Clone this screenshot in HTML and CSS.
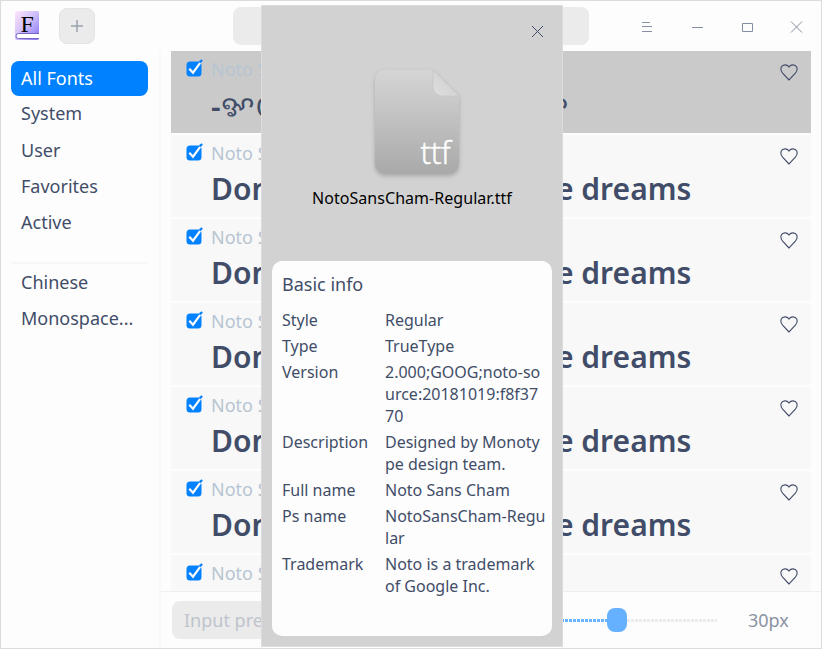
FILE: index.html
```html
<!DOCTYPE html>
<html lang="en">
<head>
<meta charset="utf-8">
<title>Font Manager</title>
<link rel="stylesheet" href="styles.css">
</head>
<body>
<svg class="defs" width="0" height="0" aria-hidden="true">
  <defs>
    <symbol id="check" viewBox="0 0 18 18">
      <rect x="1.500" y="2.500" width="15" height="15" rx="3.500" fill="#0081ff"/>
      <path d="M4.300 9.700l3.700 4L15.200 3.900" fill="none" stroke="#fbfbfb" stroke-width="2.200"/>
      <path d="M14.600 3.100L17.200 1.100" fill="none" stroke="#0081ff" stroke-width="2.200"/>
    </symbol>
    <symbol id="heart" viewBox="0 0 18 17">
      <path d="M9 16L2.600 9.200C.7 7 .6 4.700 1.300 3C2.600.3 7.200.1 9 3C10.800.1 15.400.3 16.700 3C17.400 4.700 17.300 7 15.400 9.200Z" fill="none" stroke="#414d68" stroke-width="1.100"/>
    </symbol>
  </defs>
</svg>
<div class="window">
  <header class="titlebar">
    <svg class="logo" width="26" height="32" viewBox="0 0 26 32">
      <defs><linearGradient id="lg" x1="0" y1="0" x2="1" y2="1"><stop offset="0" stop-color="#ffe6fb"/><stop offset=".5" stop-color="#cdbcfb"/><stop offset="1" stop-color="#8272f4"/></linearGradient></defs>
      <rect x="1" y="1" width="24" height="29" rx="2" fill="url(#lg)"/>
      <path d="M25 23.500H4.500a2.500 2.500 0 0 0 0 5H25" fill="#fff" stroke="#7a65c4"/>
      <text x="6.500" y="22" class="logo-letter">F</text>
    </svg>
    <button class="add"><svg width="14" height="14"><path d="M1 7h12M7 1v12" stroke="#9ba2ae" stroke-width="1.500"/></svg></button>
    <div class="search"></div>
    <svg class="controls" width="170" height="20" fill="none" stroke="#858ea2">
      <path d="M6 6.500h8M6 10.500h10M6 15.500h10M56 11.500h11M106.500 7.500h10v8h-10z"/>
      <path d="M155 5.500l11 11M166 5.500l-11 11"/>
    </svg>
  </header>
  <div class="body">
    <nav class="sidebar">
      <a class="item active">All Fonts</a>
      <a class="item second">System</a>
      <a class="item">User</a>
      <a class="item">Favorites</a>
      <a class="item">Active</a>
      <hr>
      <a class="item">Chinese</a>
      <a class="item">Monospace...</a>
    </nav>
    <main class="main">
      <div class="list">
        <article class="row selected"><svg class="check"><use href="#check"/></svg><div class="texts"><p class="name">Noto Sans Cham</p><p class="preview cham"><span class="dash">-</span>ꨀꨁꨂꨃꨄꨅꨆꨇꨈꨉꨊꨋ</p></div><svg class="heart"><use href="#heart"/></svg></article>
        <article class="row"><svg class="check"><use href="#check"/></svg><div class="texts"><p class="name">Noto Sans</p><p class="preview">Don't let your dreams be dreams</p></div><svg class="heart"><use href="#heart"/></svg></article>
        <article class="row"><svg class="check"><use href="#check"/></svg><div class="texts"><p class="name">Noto Sans</p><p class="preview">Don't let your dreams be dreams</p></div><svg class="heart"><use href="#heart"/></svg></article>
        <article class="row"><svg class="check"><use href="#check"/></svg><div class="texts"><p class="name">Noto Sans</p><p class="preview">Don't let your dreams be dreams</p></div><svg class="heart"><use href="#heart"/></svg></article>
        <article class="row"><svg class="check"><use href="#check"/></svg><div class="texts"><p class="name">Noto Sans</p><p class="preview">Don't let your dreams be dreams</p></div><svg class="heart"><use href="#heart"/></svg></article>
        <article class="row"><svg class="check"><use href="#check"/></svg><div class="texts"><p class="name">Noto Sans</p><p class="preview">Don't let your dreams be dreams</p></div><svg class="heart"><use href="#heart"/></svg></article>
        <article class="row"><svg class="check"><use href="#check"/></svg><div class="texts"><p class="name">Noto Sans</p></div><svg class="heart"><use href="#heart"/></svg></article>
      </div>
      <footer class="footer">
        <div class="input">Input preview text</div>
        <div class="slider"><span class="done"></span><span class="knob"></span><span class="rest"></span></div>
        <span class="size">30px</span>
      </footer>
    </main>
  </div>
  <section class="dialog">
    <svg class="close" width="13" height="13"><path d="M1 1l11 11M12 1L1 12" stroke="#414d68"/></svg>
    <svg class="file" width="100" height="120" viewBox="0 0 100 120">
      <defs>
        <linearGradient id="fg" x1="0" y1="0" x2="0" y2="1"><stop offset="0" stop-color="#d5d5d5"/><stop offset=".5" stop-color="#c0c0c0"/><stop offset="1" stop-color="#a9a9a9"/></linearGradient>
        <linearGradient id="fold" x1="0" y1="1" x2="1" y2="0"><stop offset="0" stop-color="#dedede"/><stop offset="1" stop-color="#cdcdcd"/></linearGradient>
      </defs>
      <path class="sheet" d="M17 7h49l26 26v68a10 10 0 0 1-10 10H18a10 10 0 0 1-10-10V17a10 10 0 0 1 9-10z" fill="url(#fg)"/>
      <path d="M66 7l26 26H75a9 9 0 0 1-9-9z" fill="url(#fold)" stroke="#c5c5c5" stroke-width=".6"/>
      <text x="53.500" y="101" class="ext" textLength="30">ttf</text>
    </svg>
    <h1>NotoSansCham-Regular.ttf</h1>
    <div class="card">
      <h2>Basic info</h2>
      <dl>
        <dt>Style</dt><dd>Regular</dd>
        <dt>Type</dt><dd>TrueType</dd>
        <dt>Version</dt><dd>2.000;GOOG;noto-so<br>urce:20181019:f8f37<br>70</dd>
        <dt>Description</dt><dd>Designed by Monoty<br>pe design team.</dd>
        <dt>Full name</dt><dd>Noto Sans Cham</dd>
        <dt>Ps name</dt><dd>NotoSansCham-Regu<br>lar</dd>
        <dt>Trademark</dt><dd>Noto is a trademark<br>of Google Inc.</dd>
      </dl>
    </div>
  </section>
</div>
</body>
</html>
```
FILE: styles.css
```css
* { box-sizing: border-box; }
body { margin: 0; font: 18px/24px "Noto Sans", sans-serif; color: #414d68; }
p, h1, h2, dl, dd { margin: 0; font-weight: 400; }
.defs { position: absolute; }
.window { position: relative; width: 822px; height: 649px; border: 1px solid #dcdcdc; background: #fdfdfd; overflow: hidden; display: flex; flex-direction: column; }
.titlebar { height: 50px; display: flex; align-items: flex-start; flex: none; }
.logo { margin: 9px 0 0 13px; }
.logo-letter { font: 24px "Liberation Serif", serif; fill: #000; }
.add { width: 36px; height: 36px; margin: 7px 0 0 19px; padding: 0; border: 1px solid #e4e4e4; border-radius: 8px; background: #ebebeb; display: grid; place-items: center; }
.search { width: 356px; height: 38px; margin: 6px 0 0 138px; border-radius: 8px; background: #ebebeb; }
.controls { margin: 15px 0 0 47px; }
.body { flex: 1; display: flex; min-height: 0; }
.sidebar { width: 160px; border-right: 2px solid #f8f8f8; padding: 10px 12px 0 10px; flex: none; }
.item { display: block; height: 35px; line-height: 35px; margin-bottom: 1px; padding-left: 10px; border-radius: 8px; }
.item.active { width: 137px; background: #0081ff; color: #fff; }
.item.second { line-height: 33px; }
.sidebar hr { height: 2px; margin: 22px 0 1px; border: 0; background: #f7f7f7; }
.main { flex: 1; display: flex; flex-direction: column; min-width: 0; }
.list { flex: 1; overflow: hidden; padding: 0 10px; display: flex; flex-direction: column; gap: 2px; min-height: 0; }
.row { height: 82px; flex: none; display: flex; background: #f8f8f8; padding-left: 14px; }
.row.selected { background: #cacaca; }
.check { width: 18px; height: 18px; margin-top: 8px; flex: none; }
.texts { flex: 1; margin-left: 8px; white-space: nowrap; }
.name { height: 34px; line-height: 37px; color: #b7c5d2; }
.preview { font-size: 30px; font-weight: 600; line-height: 40px; letter-spacing: .03px; }
.cham { display: flex; font-weight: 400; }
.dash { font-weight: 600; line-height: 44px; height: 40px; }
.heart { width: 18px; height: 17px; margin: 13px 13px 0 0; flex: none; }
.footer { height: 57px; border-top: 1px solid #efefef; display: flex; align-items: center; flex: none; padding-left: 11px; }
.input { width: 240px; height: 38px; line-height: 38px; padding-left: 12px; border-radius: 8px; background: #ebebeb; color: #bfc4cc; }
.slider { width: 244px; margin-left: 61px; display: flex; align-items: center; }
.done, .rest { height: 3px; background: repeating-linear-gradient(90deg, #69b3ff 0 3px, transparent 3px 4px); }
.done { width: 134px; }
.rest { width: 90px; background: repeating-linear-gradient(90deg, #ebebeb 0 3px, transparent 3px 4px); }
.knob { width: 20px; height: 24px; border-radius: 8px; background: #65b1ff; }
.size { margin-left: 31px; color: #8b92a3; }
.dialog { position: absolute; left: 260px; top: 4px; width: 302px; height: 642px; border: 1px solid #dcdcdc; background: #d2d2d2; padding: 0 10px; display: flex; flex-direction: column; align-items: center; }
.close { position: absolute; right: 18px; top: 19px; }
.file { margin-top: 57px; margin-left: 10px; flex: none; }
.sheet { filter: drop-shadow(0 2px 2px #0003); }
.ext { font: 32px "Open Sans", sans-serif; font-weight: 300; fill: #fff; stroke: #fff; stroke-width: .5px; }
h1 { font-size: 16px; line-height: 24px; letter-spacing: .04px; margin-top: 3px; color: #000; }
.card { width: 280px; height: 375px; margin-top: 51px; padding: 11px 0 0 10px; border-radius: 10px; background: #fdfdfd; flex: none; }
h2 { font-size: 18px; line-height: 24px; }
dl { display: grid; grid-template-columns: 103px 1fr; row-gap: 4px; margin-top: 13px; font-size: 16px; line-height: 22px; white-space: nowrap; }
```
